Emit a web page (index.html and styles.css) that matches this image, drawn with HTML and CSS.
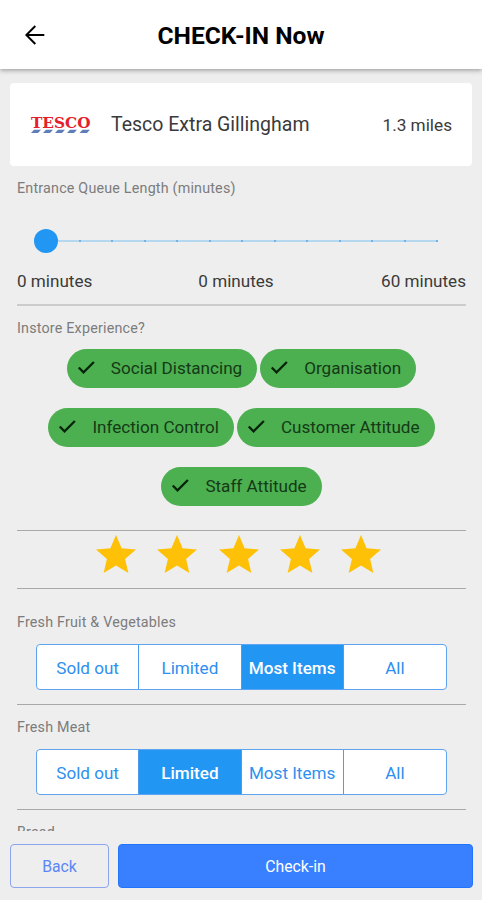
FILE: index.html
```
<!DOCTYPE html>
<html lang="en">
<head>
  <meta charset="UTF-8">
  <meta name="viewport" content="width=device-width,initial-scale=1">
  <title>CHECK-IN Now</title>
  <link rel="stylesheet" href="styles.css">
</head>
<body>
  <svg class="defs" width="0" height="0" aria-hidden="true">
    <symbol id="check" viewBox="0 0 24 24"><path d="M3 11.5l5.2 5.2L19.5 5.5" fill="none" stroke="currentColor" stroke-width="2.5"/></symbol>
    <symbol id="star" viewBox="2 2 20 19"><path d="M12 17.27L18.18 21l-1.64-7.03L22 9.24l-7.19-.61L12 2 9.19 8.63 2 9.24l5.46 4.73L5.82 21z" fill="#ffc107"/></symbol>
  </svg>

  <header class="topbar">
    <svg class="back-arrow" viewBox="0 0 20 20"><path d="M19.3 10H1.5M10.3 1L1.3 10l9 9" fill="none" stroke="#000" stroke-width="2"/></svg>
    <h1>CHECK-IN Now</h1>
  </header>

  <main class="content">
    <div class="store-card">
      <svg class="logo" viewBox="0 0 60 20">
        <text x="0" y="12.5" textLength="59.5" lengthAdjust="spacingAndGlyphs" class="logo-text">TESCO</text>
        <path class="logo-stripes" d="M3 14.8h7l-3 3.2H0zM15 14.8h7l-3 3.2h-7zM27 14.8h7l-3 3.2h-7zM39 14.8h7l-3 3.2h-7zM51.5 14.8h7.5l-3 3.2h-7.5z"/>
      </svg>
      <span class="store-name">Tesco Extra Gillingham</span>
      <span class="distance">1.3 miles</span>
    </div>

    <section class="section queue">
      <div class="label">Entrance Queue Length (minutes)</div>
      <div class="slider">
        <span class="knob"></span>
        <div class="track">
          <i></i><i></i><i></i><i></i><i></i><i></i><i></i><i></i><i></i><i></i><i></i><i></i><i></i>
        </div>
      </div>
      <div class="range">
        <span>0 minutes</span><span>0 minutes</span><span>60 minutes</span>
      </div>
    </section>

    <section class="section experience">
      <div class="label">Instore Experience?</div>
      <div class="chips">
        <span class="chip"><svg><use href="#check"/></svg><span>Social Distancing</span></span>
        <span class="chip"><svg><use href="#check"/></svg><span>Organisation</span></span>
        <span class="chip"><svg><use href="#check"/></svg><span>Infection Control</span></span>
        <span class="chip"><svg><use href="#check"/></svg><span>Customer Attitude</span></span>
        <span class="chip"><svg><use href="#check"/></svg><span>Staff Attitude</span></span>
      </div>
    </section>

    <section class="section stars">
      <svg><use href="#star"/></svg>
      <svg><use href="#star"/></svg>
      <svg><use href="#star"/></svg>
      <svg><use href="#star"/></svg>
      <svg><use href="#star"/></svg>
    </section>

    <section class="section stock first">
      <div class="label">Fresh Fruit &amp; Vegetables</div>
      <div class="segment">
        <button>Sold out</button><button>Limited</button><button class="active">Most Items</button><button>All</button>
      </div>
    </section>

    <section class="section stock">
      <div class="label">Fresh Meat</div>
      <div class="segment">
        <button>Sold out</button><button class="active">Limited</button><button>Most Items</button><button>All</button>
      </div>
    </section>

    <section class="section stock">
      <div class="label">Bread</div>
    </section>
  </main>

  <footer class="actions">
    <button class="back">Back</button>
    <button class="checkin">Check-in</button>
  </footer>
</body>
</html>
```
FILE: styles.css
```
* { box-sizing: border-box; }
body {
  margin: 0;
  height: 900px;
  display: flex;
  flex-direction: column;
  overflow: hidden;
  background: #eee;
  color: #3a3a3a;
  font-family: Roboto, sans-serif;
}
.defs { position: absolute; }
button { font-family: inherit; padding: 0; margin: 0; }

.topbar {
  flex: none;
  height: 69px;
  display: grid;
  grid-template-columns: 70px 1fr 70px;
  align-items: center;
  background: #fff;
  box-shadow: 0 1px 5px rgba(0,0,0,0.4);
  z-index: 1;
}
.back-arrow { width: 20px; height: 20px; margin-left: 25px; }
.topbar h1 {
  margin: 3px 0 0;
  text-align: center;
  font-size: 24.6px;
  line-height: 30px;
  font-weight: 700;
  color: #000;
}

.content { height: 762px; overflow: hidden; padding-top: 14px; }
.store-card {
  height: 83px;
  margin: 0 10px;
  padding: 0 20px 0 21px;
  display: flex;
  align-items: center;
  background: #fff;
  border-radius: 4px;
}
.logo { width: 60px; height: 20px; margin-right: 20px; overflow: visible; }
.logo-text { font: bold 15px "DejaVu Serif", serif; fill: #e5202a; }
.logo-stripes { fill: #5f7db6; }
.store-name { flex: 1; font-size: 19.5px; line-height: 23px; }
.distance { font-size: 17.2px; }

.section { margin: 0 16px 0 17px; border-bottom: 1px solid #a9a9a9; }
.label {
  height: 20px;
  line-height: 20px;
  font-size: 14.3px;
  letter-spacing: 0.2px;
  color: #7c7c7c;
}
.queue { height: 140px; padding-top: 12px; border-bottom: 2px solid #ccc; }
.slider { display: flex; align-items: center; height: 24px; margin: 31px 28px 0 17px; }
.knob { width: 24px; height: 24px; border-radius: 50%; background: #2196f3; z-index: 1; }
.track {
  flex: 1;
  height: 2px;
  margin-left: -12px;
  display: flex;
  justify-content: space-between;
  background: #b5d7f0;
}
.track i { width: 2px; height: 2px; background: #6fb3e8; }
.range {
  display: grid;
  grid-template-columns: 1fr 1fr 1fr;
  margin-top: 18px;
  line-height: 20px;
  font-size: 17.1px;
}
.range span:nth-child(2) { text-align: center; padding-right: 11px; }
.range span:nth-child(3) { text-align: right; }

.experience { height: 225px; padding-top: 12px; }
.chips {
  display: flex;
  flex-wrap: wrap;
  justify-content: center;
  margin: 11px 25px 0;
  gap: 20px 3px;
}
.chip {
  height: 39px;
  padding: 0 15px 1px 9px;
  display: flex;
  align-items: center;
  border-radius: 20px;
  background: #4caf50;
  color: #143a16;
  font-size: 17.1px;
}
.chip svg { width: 22px; height: 22px; margin-right: 13px; color: #07230a; }

.stars { height: 58px; display: flex; justify-content: center; gap: 21.3px; padding: 4px 6px 0 0; }
.stars svg { width: 40px; height: 38px; }

.stock { height: 105px; padding-top: 12px; }
.stock.first { height: 116px; padding-top: 23px; }
.segment {
  height: 46px;
  margin: 12px 19px 0;
  display: grid;
  grid-template-columns: repeat(4, 1fr);
  background: #fff;
  border: 1px solid #5ea4f0;
  border-radius: 4px;
  overflow: hidden;
}
.segment button {
  border: 0;
  border-right: 1px solid #4c9df0;
  padding-top: 2px;
  background: none;
  color: #2e8ff0;
  font-size: 17.1px;
}
.segment button:last-child { border-right: 0; }
.segment .active { background: #2196f3; color: #fff; font-weight: 500; }

.actions {
  flex: 1;
  display: flex;
  gap: 9px;
  padding: 13px 9px 12px 10px;
}
.actions button { height: 44px; border-radius: 4px; font-size: 15.8px; }
.back { width: 99px; border: 1px solid #8ba5ee; background: none; color: #5b86f5; }
.actions .checkin { flex: 1; border: 1px solid #2274ff; background: #3880ff; color: #fff; }
```
